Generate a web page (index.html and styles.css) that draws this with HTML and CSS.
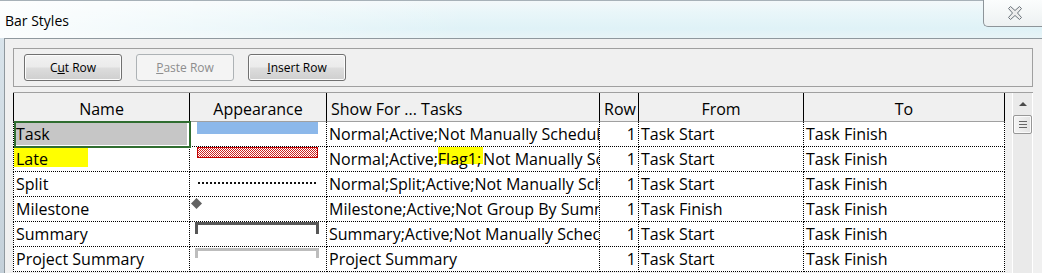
FILE: index.html
```html
<!DOCTYPE html>
<html lang="en">
<head>
    <meta charset="UTF-8">
    <title>Bar Styles</title>
    <link rel="stylesheet" href="styles.css">
</head>
<body>
    <div class="window">
        <div class="titlebar">
            <span class="title">Bar Styles</span>
            <div class="close">
                <svg width="16" height="16" viewBox="0 0 16 16">
                    <polygon points="1.5,3.5 3.5,1.5 8,5.5 12.5,1.5 14.5,3.5 10.5,8 14.5,12.5 12.5,14.5 8,10.5 3.5,14.5 1.5,12.5 5.5,8" fill="#ececec" stroke="#6b747b" stroke-width="1"/>
                </svg>
            </div>
        </div>

        <div class="client">
            <div class="toolbar">
                <button class="btn">C<u>u</u>t Row</button>
                <button class="btn" disabled><u>P</u>aste Row</button>
                <button class="btn"><u>I</u>nsert Row</button>
            </div>

            <div class="grid-wrap">
                <div class="grid">
                    <!-- header -->
                    <div class="hd first center">Name</div>
                    <div class="hd center">Appearance</div>
                    <div class="hd">Show For ... Tasks</div>
                    <div class="hd">Row</div>
                    <div class="hd center">From</div>
                    <div class="hd center">To</div>

                    <!-- Task -->
                    <div class="cell first sel">Task</div>
                    <div class="cell app"><div class="bar-task"></div></div>
                    <div class="cell">Normal;Active;Not Manually Scheduled</div>
                    <div class="cell num">1</div>
                    <div class="cell">Task Start</div>
                    <div class="cell">Task Finish</div>

                    <!-- Late -->
                    <div class="cell first marked">Late</div>
                    <div class="cell app">
                        <svg class="bar-late" width="121" height="11" viewBox="0 0 121 11" shape-rendering="crispEdges">
                            <defs>
                                <pattern id="checker" width="2" height="2" patternUnits="userSpaceOnUse">
                                    <rect width="2" height="2" fill="#fff"/>
                                    <rect width="1" height="1" fill="#d02020"/>
                                    <rect x="1" y="1" width="1" height="1" fill="#d02020"/>
                                </pattern>
                            </defs>
                            <rect x="0.5" y="0.5" width="120" height="10" fill="url(#checker)" stroke="#c00000"/>
                        </svg>
                    </div>
                    <div class="cell">Normal;Active;<span class="flag">Flag1;</span>Not Manually Scheduled</div>
                    <div class="cell num">1</div>
                    <div class="cell">Task Start</div>
                    <div class="cell">Task Finish</div>

                    <!-- Split -->
                    <div class="cell first">Split</div>
                    <div class="cell app"><div class="bar-split"></div></div>
                    <div class="cell">Normal;Split;Active;Not Manually Scheduled</div>
                    <div class="cell num">1</div>
                    <div class="cell">Task Start</div>
                    <div class="cell">Task Finish</div>

                    <!-- Milestone -->
                    <div class="cell first">Milestone</div>
                    <div class="cell app">
                        <svg class="milestone" width="11" height="11" viewBox="0 0 11 11">
                            <polygon points="5.5,0 11,5.5 5.5,11 0,5.5" fill="#626262"/>
                        </svg>
                    </div>
                    <div class="cell">Milestone;Active;Not Group By Summary;Not Manually Scheduled</div>
                    <div class="cell num">1</div>
                    <div class="cell">Task Finish</div>
                    <div class="cell">Task Finish</div>

                    <!-- Summary -->
                    <div class="cell first">Summary</div>
                    <div class="cell app"><div class="bracket"></div></div>
                    <div class="cell">Summary;Active;Not Manually Scheduled</div>
                    <div class="cell num">1</div>
                    <div class="cell">Task Start</div>
                    <div class="cell">Task Finish</div>

                    <!-- Project Summary -->
                    <div class="cell first">Project Summary</div>
                    <div class="cell app"><div class="bracket light"></div></div>
                    <div class="cell">Project Summary</div>
                    <div class="cell num">1</div>
                    <div class="cell">Task Start</div>
                    <div class="cell">Task Finish</div>
                </div>

                <div class="vscroll">
                    <div class="sb-up">
                        <svg width="8" height="4" viewBox="0 0 8 4"><polygon points="4,0 8,4 0,4" fill="#4a4a4a"/></svg>
                    </div>
                    <div class="sb-thumb">
                        <span></span><span></span><span></span>
                    </div>
                </div>
            </div>
        </div>
    </div>
</body>
</html>
```

FILE: styles.css
```css
* {
    box-sizing: border-box;
}

html,
body {
    margin: 0;
    padding: 0;
}

body {
    font-family: "Open Sans", "Noto Sans", sans-serif;
    color: #000;
    background: linear-gradient(#dce7ee, #c4d0d9);
    overflow: hidden;
}

.window {
    display: flex;
    flex-direction: column;
    height: 273px;
}

/* title bar */
.titlebar {
    height: 38px;
    display: flex;
    justify-content: space-between;
    align-items: flex-start;
    border-top: 1px solid #a7b1b8;
    background:
        linear-gradient(to right, rgba(255, 255, 255, 0.85), rgba(255, 255, 255, 0) 45%),
        linear-gradient(#f3f8fa 0, #e9f6f9 30%, #dff2f7 75%, #e8f4f7 100%);
}

.title {
    font-size: 14px;
    line-height: 20px;
    padding: 10px 0 0 5px;
}

.close {
    width: 59px;
    height: 27px;
    margin-top: -1px;
    display: flex;
    align-items: center;
    justify-content: center;
    padding-left: 3px;
    border-left: 1px solid #8d9499;
    border-bottom: 1px solid #8d9499;
    border-bottom-left-radius: 5px;
    background: linear-gradient(#fbfdfd, #edf1f2);
}

/* client area */
.client {
    flex: 1;
    min-height: 0;
    margin-left: 4px;
    border-left: 1px solid #8f989e;
    border-top: 1px solid #8f989e;
    background: #f0f0f0;
    display: flex;
    flex-direction: column;
}

.toolbar {
    height: 39px;
    margin: 9px 9px 0 8px;
    border: 1px solid #a0a0a0;
    padding: 5px 0 0 10px;
    display: flex;
    align-items: flex-start;
    gap: 14px;
}

.btn {
    width: 98px;
    height: 27px;
    padding: 0;
    font-family: "Open Sans", "Noto Sans", sans-serif;
    font-size: 12px;
    color: #000;
    border: 1px solid #707070;
    border-radius: 3px;
    box-shadow: inset 0 0 0 1px #fcfcfc;
    background: linear-gradient(#f2f2f2 0, #ebebeb 48%, #dddddd 52%, #cfcfcf 100%);
}

.btn:disabled {
    color: #8d8d8d;
    border-color: #adb2b5;
    box-shadow: none;
    background: #f4f4f4;
}

/* grid */
.grid-wrap {
    flex: 1;
    min-height: 0;
    margin: 5px 9px 0 8px;
    border-top: 1px solid #a0a0a0;
    display: flex;
    overflow: hidden;
}

.grid {
    flex: none;
    width: 992px;
    display: grid;
    grid-template-columns: 177px 137px 273px 39px 165px 201px;
    grid-template-rows: 29px repeat(6, 25px);
    font-size: 16px;
}

.hd {
    background: #f0f0f0;
    border-right: 1px solid #000;
    border-bottom: 1px solid #a0a0a0;
    padding: 5px 4px 0;
    line-height: 23px;
    white-space: nowrap;
    overflow: hidden;
}

.hd.first {
    border-left: 1px solid #000;
}

.hd.center {
    text-align: center;
}

.cell {
    background: #fff;
    border-right: 1px dotted #000;
    border-bottom: 1px dotted #000;
    padding: 0 2px;
    line-height: 24px;
    white-space: nowrap;
    overflow: hidden;
}

.cell.first {
    border-left: 1px dotted #000;
}

.cell.num {
    text-align: right;
}

.cell.app {
    padding: 0;
}

/* selected cell */
.cell.sel {
    position: relative;
    z-index: 1;
    overflow: visible;
    background: linear-gradient(#c6c6c6, #c6c6c6) 2px 1px / 171px 22px no-repeat, #fff;
}

.cell.sel::after {
    content: "";
    position: absolute;
    left: 0;
    top: -1px;
    right: -2px;
    bottom: -2px;
    border: 2px solid #2f6d30;
}

/* highlighter marks */
.cell.marked {
    background: linear-gradient(#ffff00, #ffff00) 0 0 / 74px 20px no-repeat, #fff;
}

.flag {
    padding-top: 5px;
    padding-right: 2px;
    background: linear-gradient(#ffff00, #ffff00) 0 0 / 100% 21px no-repeat;
}

/* bar appearance samples */
.bar-task {
    margin-left: 7px;
    width: 121px;
    height: 12px;
    background: #8cb8ea;
}

.bar-late {
    display: block;
    margin-left: 7px;
}

.bar-split {
    margin: 10px 0 0 8px;
    width: 118px;
    height: 2px;
    background: repeating-linear-gradient(90deg, #111 0 2px, transparent 2px 4px);
}

.milestone {
    display: block;
    margin: 1px 0 0 1px;
}

.bracket {
    margin-left: 5px;
    width: 124px;
    height: 12px;
    border: 3px solid #575757;
    border-bottom: 0;
}

.bracket.light {
    margin-top: 1px;
    height: 10px;
    border-color: #bdbdbd;
}

/* vertical scrollbar */
.vscroll {
    flex: none;
    width: 21px;
    margin-left: 7px;
    border-left: 1px solid #fff;
    border-right: 1px solid #fff;
    background: #eaeaea;
}

.sb-up {
    height: 22px;
    display: flex;
    align-items: center;
    justify-content: center;
}

.sb-up svg {
    display: block;
}

.sb-thumb {
    height: 19px;
    border: 1px solid #979797;
    border-radius: 2px;
    background: linear-gradient(90deg, #f4f4f4, #e3e3e3);
    box-shadow: inset 0 0 0 1px #fafafa;
    display: flex;
    flex-direction: column;
    align-items: center;
    justify-content: center;
    gap: 2px;
}

.sb-thumb span {
    display: block;
    width: 8px;
    height: 1px;
    background: #666;
}
```
